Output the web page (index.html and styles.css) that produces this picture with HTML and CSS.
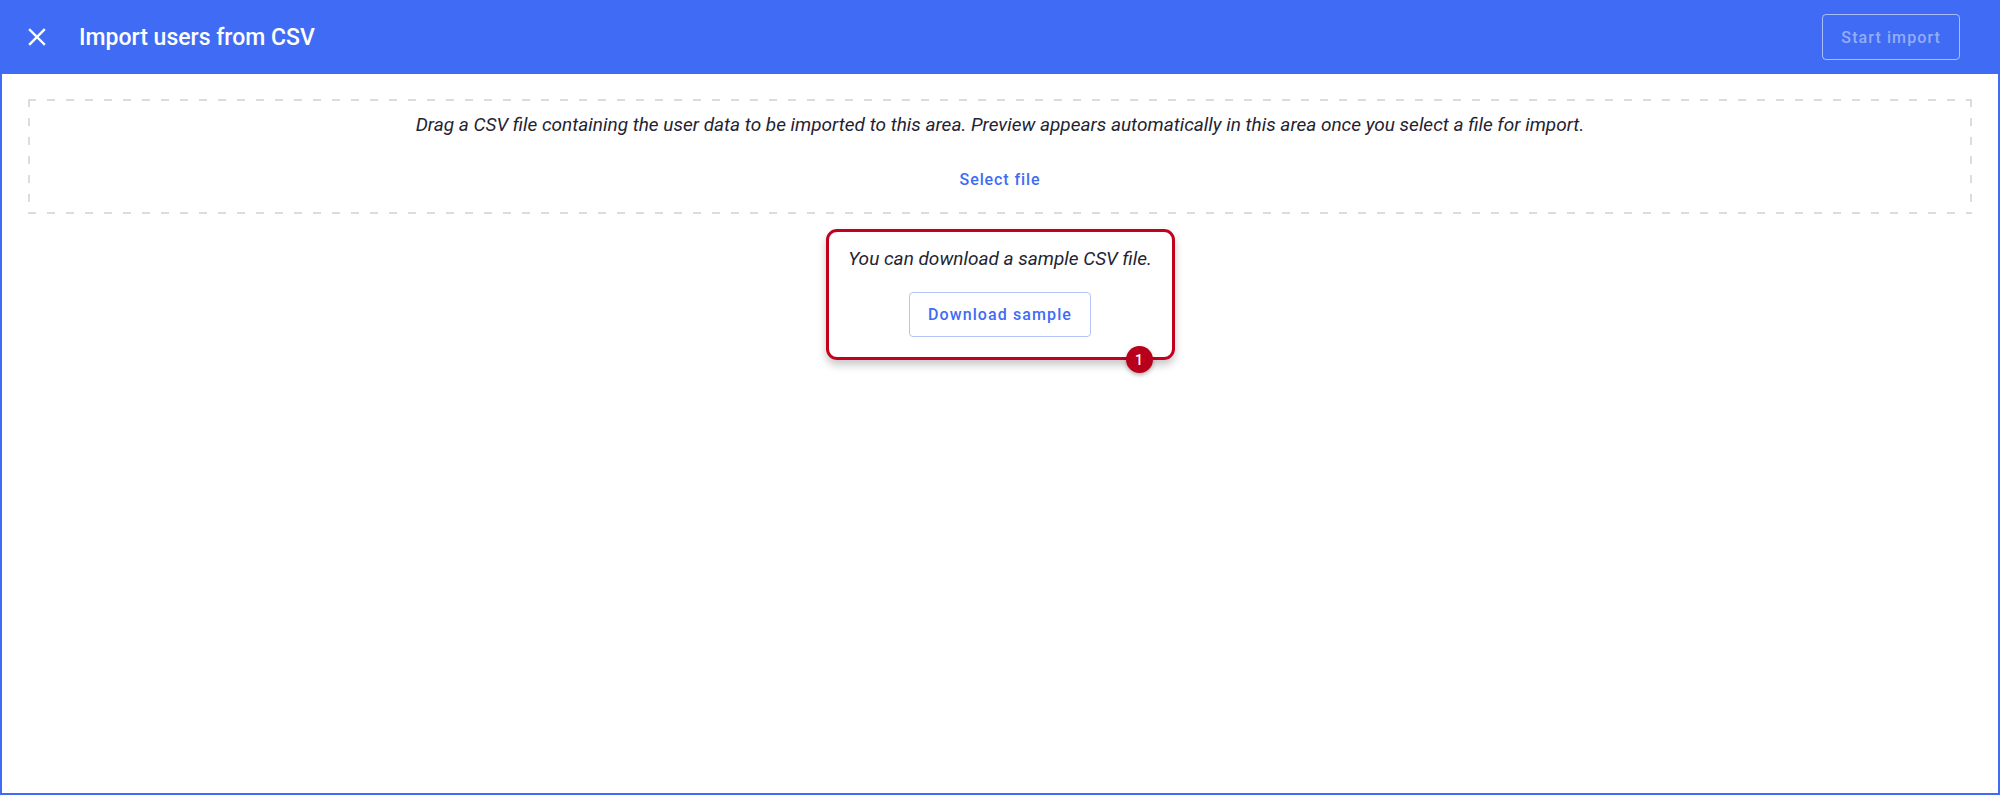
FILE: index.html
```html
<!DOCTYPE html>
<html lang="en">
<head>
    <meta charset="UTF-8">
    <meta name="viewport" content="width=device-width, initial-scale=1.0">
    <title>Import users from CSV</title>
    <link rel="stylesheet" href="styles.css">
</head>
<body>
    <div class="dialog">
        <header class="topbar">
            <button class="btn-close" aria-label="Close">
                <svg width="18" height="18" viewBox="0 0 18 18">
                    <path d="M2 2 L16 16 M16 2 L2 16" stroke="#fff" stroke-width="2.4" stroke-linecap="square"/>
                </svg>
            </button>
            <h1 class="title">Import users from CSV</h1>
            <button class="btn-start" disabled>Start import</button>
        </header>

        <main class="content">
            <div class="dropzone">
                <p class="hint">Drag a CSV file containing the user data to be imported to this area. Preview appears automatically in this area once you select a file for import.</p>
                <button class="btn-text">Select file</button>
            </div>

            <div class="sample">
                <div class="sample-box">
                    <p class="hint">You can download a sample CSV file.</p>
                    <button class="btn-outline">Download sample</button>
                    <span class="badge">1</span>
                </div>
            </div>
        </main>
    </div>
</body>
</html>
```

FILE: styles.css
```css
* {
    box-sizing: border-box;
}

body {
    margin: 0;
    background-color: #fff;
    font-family: Roboto, "Liberation Sans", sans-serif;
    color: #1f2433;
}

button {
    font-family: inherit;
    cursor: pointer;
}

.dialog {
    height: 795px;
    display: flex;
    flex-direction: column;
    border: 2px solid #406cf5;
    border-top: none;
}

.topbar {
    display: flex;
    align-items: center;
    height: 74px;
    margin: 0 -2px;
    padding: 0 40px 0 26px;
    background-color: #406cf5;
}

.btn-close {
    display: flex;
    align-items: center;
    justify-content: center;
    width: 22px;
    height: 22px;
    padding: 0;
    border: none;
    background: none;
}

.title {
    margin: 0 0 0 31px;
    flex: 1;
    font-size: 23px;
    font-weight: 500;
    color: #fff;
}

.btn-start {
    height: 46px;
    padding: 0 18px;
    border: 1px solid rgba(255, 255, 255, 0.55);
    border-radius: 4px;
    background: none;
    color: rgba(255, 255, 255, 0.45);
    font-size: 16px;
    font-weight: 500;
    letter-spacing: 1.1px;
}

.content {
    flex: 1;
    padding: 25px 26px;
}

/* dashed outline drawn with gradients to get longer dashes */
.dropzone {
    display: flex;
    flex-direction: column;
    align-items: center;
    height: 115px;
    padding: 13px 20px 0;
    background:
        repeating-linear-gradient(90deg, #dcdcdc 0 8px, transparent 8px 19px) top left / 100% 2px no-repeat,
        repeating-linear-gradient(90deg, #dcdcdc 0 8px, transparent 8px 19px) bottom left / 100% 2px no-repeat,
        repeating-linear-gradient(180deg, #dcdcdc 0 8px, transparent 8px 19px) top left / 2px 100% no-repeat,
        repeating-linear-gradient(180deg, #dcdcdc 0 8px, transparent 8px 19px) top right / 2px 100% no-repeat;
}

.hint {
    margin: 0;
    font-size: 19px;
    line-height: 26px;
    font-style: italic;
}

.btn-text {
    margin-top: 24px;
    height: 34px;
    padding: 0 8px;
    border: none;
    background: none;
    color: #406cf5;
    font-size: 16px;
    font-weight: 500;
    letter-spacing: 0.9px;
}

.sample {
    display: flex;
    justify-content: center;
    margin-top: 15px;
}

.sample-box {
    position: relative;
    display: flex;
    flex-direction: column;
    align-items: center;
    width: 349px;
    padding: 14px 0 20px;
    border: 3px solid #c2001f;
    border-radius: 11px;
    box-shadow: 0 5px 8px rgba(0, 0, 0, 0.22);
}

.btn-outline {
    margin-top: 20px;
    height: 45px;
    padding: 0 18px;
    border: 1px solid #b4c4f7;
    border-radius: 4px;
    background: #fff;
    color: #406cf5;
    font-size: 16px;
    font-weight: 500;
    letter-spacing: 1.1px;
}

.badge {
    position: absolute;
    right: 19px;
    bottom: -16px;
    display: flex;
    align-items: center;
    justify-content: center;
    width: 27px;
    height: 27px;
    border-radius: 50%;
    background-color: #b8001c;
    color: #fff;
    font-size: 14px;
    font-weight: 500;
    box-shadow: 0 2px 4px rgba(0, 0, 0, 0.3);
}
```
